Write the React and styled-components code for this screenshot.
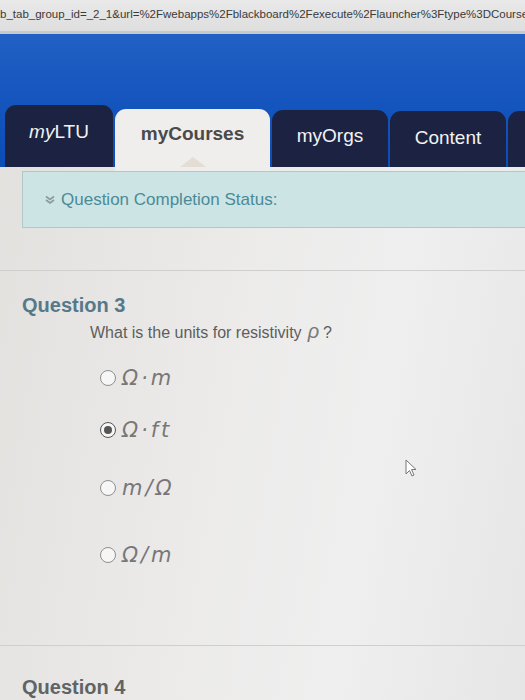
import React from 'react';
import styled, { createGlobalStyle, css } from 'styled-components';

const GlobalStyle = createGlobalStyle`
  html, body {
    margin: 0;
    padding: 0;
    overflow: hidden;
  }
  body {
    background: linear-gradient(100deg, #e2e0dd 0%, #ecebea 45%, #efefef 70%, #e6e6e6 100%);
    font-family: 'Liberation Sans', Arial, sans-serif;
  }
`;

const Page = styled.div`
  width: 525px;
  height: 700px;
  position: relative;
  overflow: hidden;
`;

const AddressBar = styled.div`
  height: 31px;
  background: linear-gradient(180deg, #e9e9e9, #dedede);
  border-bottom: 3px solid #c9c9c9;
  font-size: 11.5px;
  line-height: 28px;
  color: #3a3a3a;
  white-space: nowrap;
  overflow: hidden;
`;

const Header = styled.div`
  height: 133px;
  background: linear-gradient(180deg, #2160c4 0%, #1454bd 55%, #0b4cb6 100%);
  display: flex;
  align-items: flex-end;
  gap: 2px;
  padding-left: 5px;
`;

const Tab = styled.div`
  flex: none;
  width: ${(p) => p.w}px;
  height: ${(p) => p.h}px;
  border-radius: 11px 11px 0 0;
  background: #1c2342;
  color: #f2f2f2;
  font-size: 19px;
  display: flex;
  justify-content: center;
  padding-top: ${(p) => p.pt}px;
  box-sizing: border-box;
  position: relative;

  ${(p) =>
    p.active &&
    css`
      background: #efeeec;
      color: #4a4a4a;
      font-weight: bold;
      margin-bottom: -4px;
    `}
`;

const Pointer = styled.span`
  position: absolute;
  bottom: 4px;
  left: 50%;
  transform: translateX(-50%);
  border-left: 13px solid transparent;
  border-right: 13px solid transparent;
  border-bottom: 10px solid #e3ddd4;
`;

const Body = styled.div`
  padding-top: 4px;
`;

const StatusBox = styled.div`
  margin-left: 22px;
  margin-right: -10px;
  height: 55px;
  background: #cde4e5;
  border: 1px solid #b0c8ca;
  display: flex;
  align-items: center;
  gap: 6px;
  padding-left: 22px;
  font-size: 17px;
  color: #4b8b97;
`;

const Divider = styled.div`
  height: 1px;
  background: #cfcfcf;
  margin-top: ${(p) => p.mt}px;
`;

const QuestionBlock = styled.div`
  padding-left: 22px;
`;

const QuestionTitle = styled.div`
  font-size: 20px;
  font-weight: bold;
  color: ${(p) => p.color || '#56798a'};
  margin-top: ${(p) => p.mt}px;
`;

const Prompt = styled.div`
  margin-left: 68px;
  margin-top: 3px;
  font-size: 16px;
  color: #5e5e5e;
  display: flex;
  align-items: baseline;
  gap: 4px;
`;

const Rho = styled.span`
  font-size: 20px;
  font-style: italic;
  color: #7a7a7a;
  margin-left: 2px;
`;

const Options = styled.div`
  margin-left: 78px;
  margin-top: 18px;
  display: flex;
  flex-direction: column;
`;

const Option = styled.div`
  display: flex;
  align-items: center;
  gap: 6px;
  height: 34px;
  margin-bottom: ${(p) => p.mb}px;
`;

const Radio = styled.span`
  width: 14px;
  height: 14px;
  border-radius: 50%;
  border: 1.5px solid #8f8f8f;
  background: #f6f6f6;
  display: flex;
  align-items: center;
  justify-content: center;

  ${(p) =>
    p.checked &&
    css`
      border-color: #555;
      &::after {
        content: '';
        width: 8px;
        height: 8px;
        border-radius: 50%;
        background: #555;
      }
    `}
`;

const Unit = styled.span`
  font-family: 'DejaVu Sans', 'Liberation Sans', sans-serif;
  font-style: italic;
  font-size: 21px;
  color: #777;
  letter-spacing: 3px;
`;

const Cursor = styled.svg`
  position: absolute;
  left: 405px;
  top: 459px;
`;

const tabs = [
  { label: <><i>my</i>LTU</>, w: 108, h: 62, pt: 16 },
  { label: 'myCourses', w: 155, h: 62, pt: 14, active: true },
  { label: 'myOrgs', w: 116, h: 57, pt: 15 },
  { label: 'Content', w: 116, h: 56, pt: 16 },
  { label: '', w: 40, h: 56, pt: 16 },
];

const options = [
  { label: 'Ω·m', mb: 18 },
  { label: 'Ω·ft', checked: true, mb: 24 },
  { label: 'm/Ω', mb: 33 },
  { label: 'Ω/m', mb: 0 },
];

const ChevronDown = () => (
  <svg width="10" height="10" viewBox="0 0 10 10">
    <path d="M1 1.5 L5 4.5 L9 1.5 M1 5 L5 8 L9 5" fill="none" stroke="#8a9a9c" strokeWidth="1.6" />
  </svg>
);

export default function App() {
  return (
    <>
      <GlobalStyle />
      <Page>
        <AddressBar>
          b_tab_group_id=_2_1&amp;url=%2Fwebapps%2Fblackboard%2Fexecute%2Flauncher%3Ftype%3DCourse%25
        </AddressBar>
        <Header>
          {tabs.map((t, i) => (
            <Tab key={i} w={t.w} h={t.h} pt={t.pt} active={t.active}>
              {t.label}
              {t.active && <Pointer />}
            </Tab>
          ))}
        </Header>
        <Body>
          <StatusBox>
            <ChevronDown />
            Question Completion Status:
          </StatusBox>
          <Divider mt={42} />
          <QuestionBlock>
            <QuestionTitle mt={23}>Question 3</QuestionTitle>
            <Prompt>
              What is the units for resistivity <Rho>ρ</Rho> ?
            </Prompt>
            <Options>
              {options.map((o) => (
                <Option key={o.label} mb={o.mb}>
                  <Radio checked={o.checked} />
                  <Unit>{o.label}</Unit>
                </Option>
              ))}
            </Options>
          </QuestionBlock>
          <Divider mt={73} />
          <QuestionBlock>
            <QuestionTitle mt={30} color="#5f6466">Question 4</QuestionTitle>
          </QuestionBlock>
        </Body>
        <Cursor width="14" height="20" viewBox="0 0 14 20">
          <path d="M1 1 L1 15 L4.5 11.5 L7 17 L9 16 L6.5 10.5 L11 10.5 Z" fill="#fff" stroke="#777" strokeWidth="1" />
        </Cursor>
      </Page>
    </>
  );
}
